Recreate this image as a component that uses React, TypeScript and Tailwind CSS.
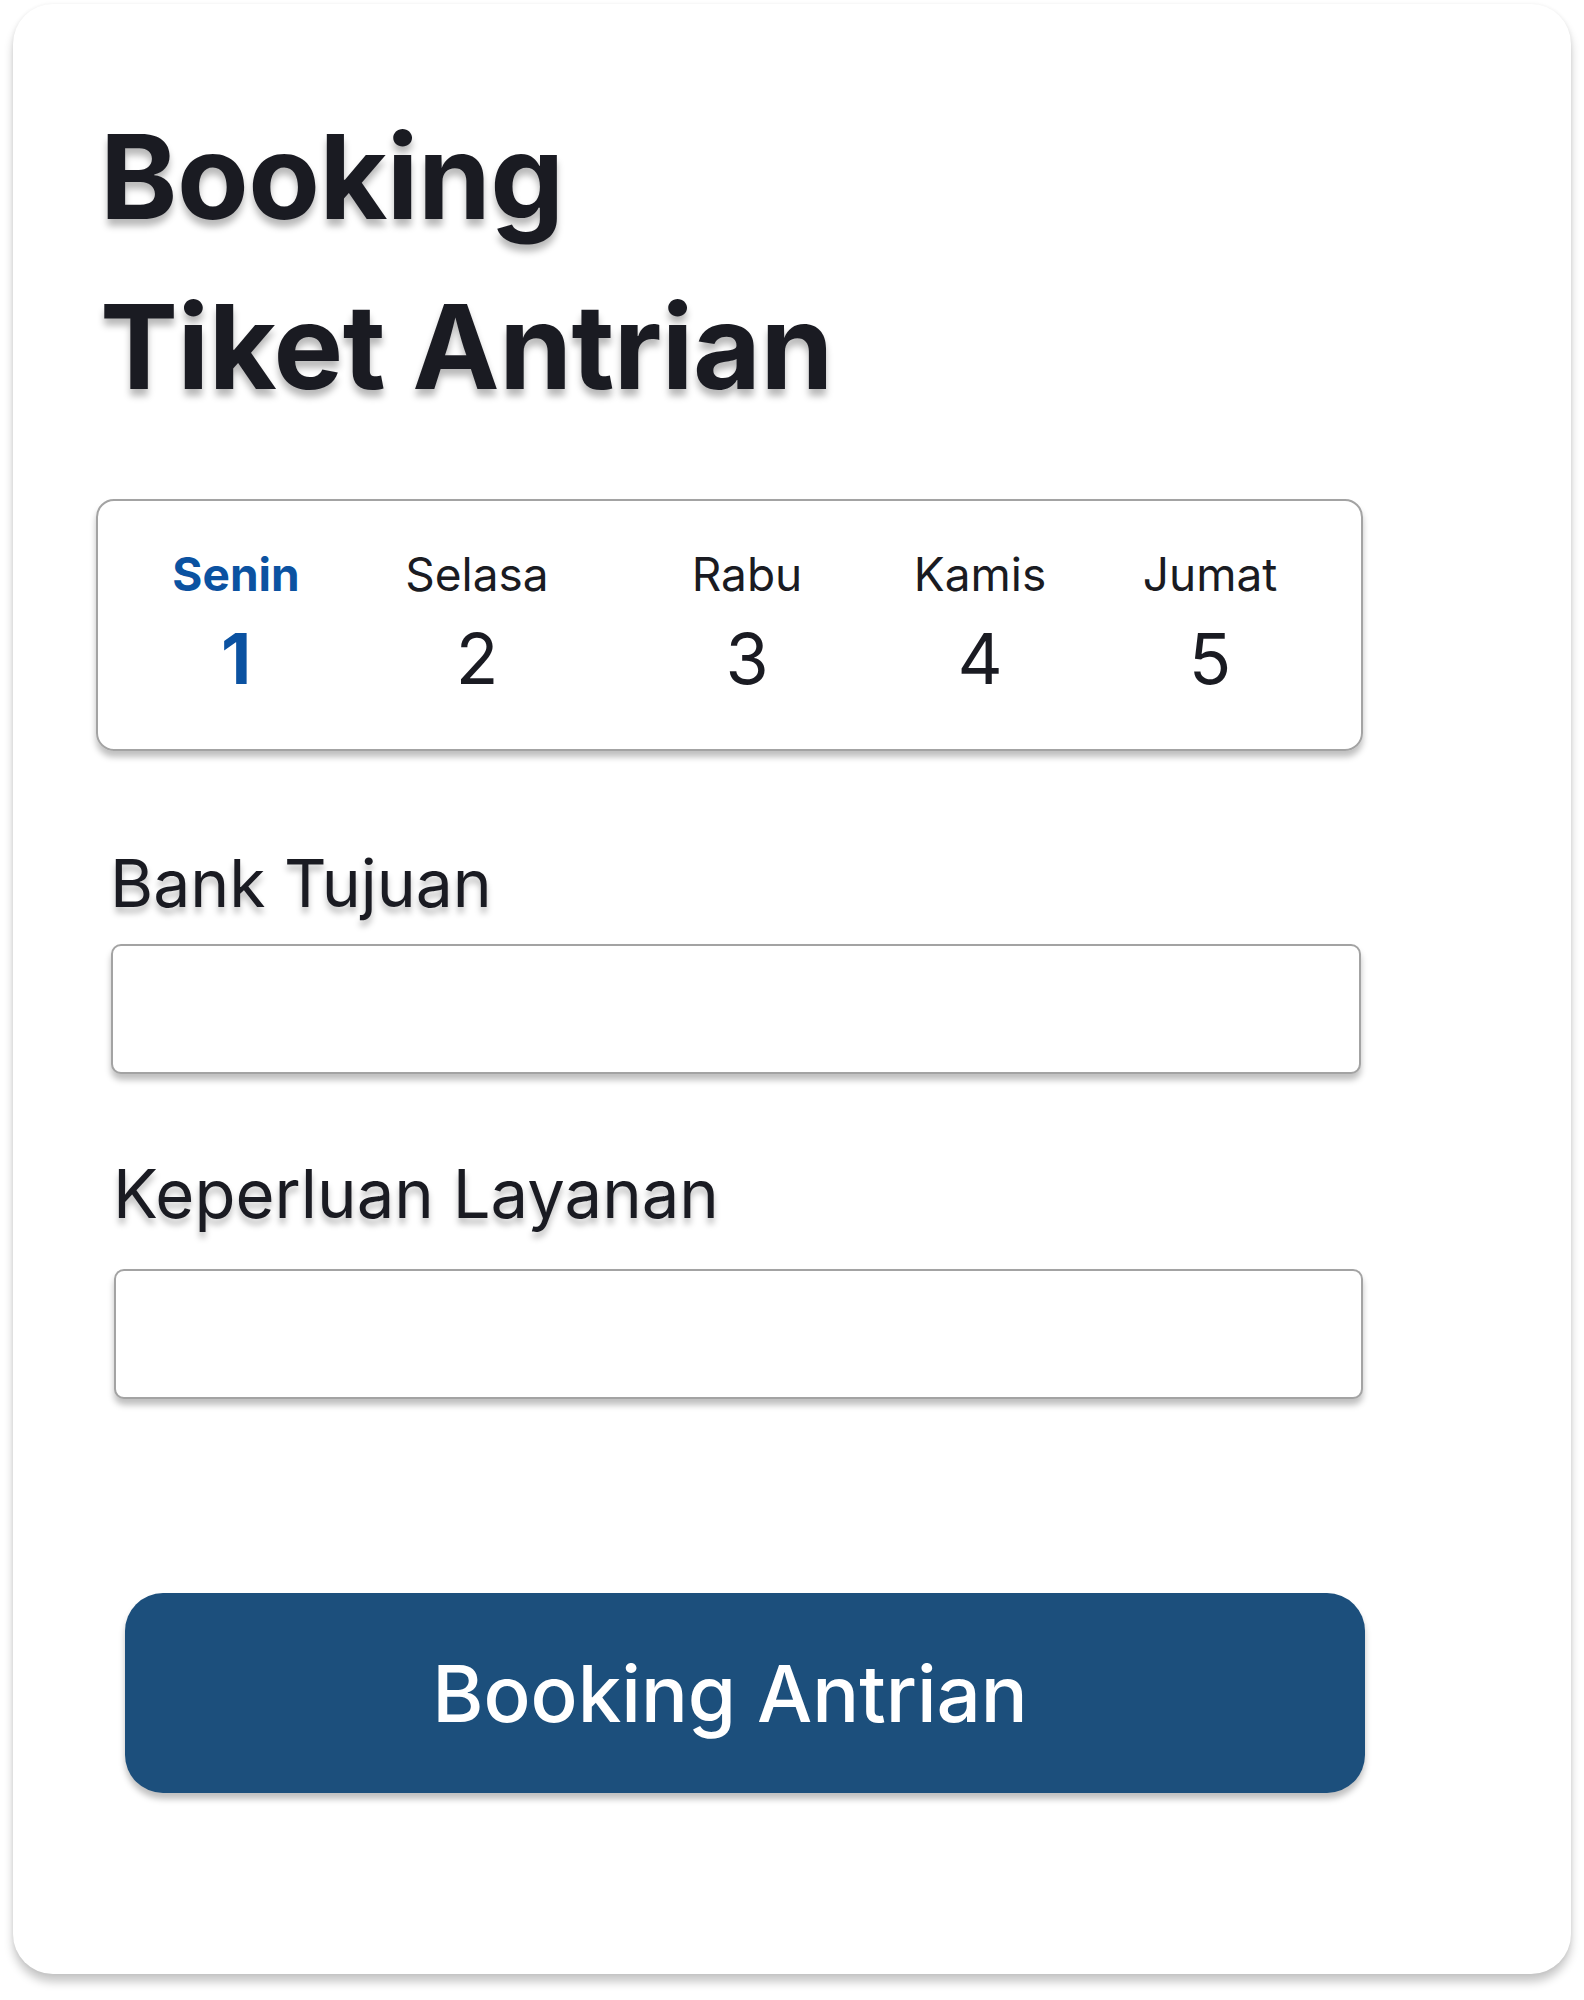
import React from 'react';

const days = [
    { name: 'Senin', num: 1, ml: 'ml-[58px]' },
    { name: 'Selasa', num: 2, ml: 'ml-[81px]' },
    { name: 'Rabu', num: 3, ml: 'ml-[110px]' },
    { name: 'Kamis', num: 4, ml: 'ml-[73px]' },
    { name: 'Jumat', num: 5, ml: 'ml-[70px]' },
];

export default function App() {
    const active = 1;

    return (
        <div className="min-h-screen bg-white font-['Inter','Liberation_Sans',sans-serif] text-[#1a1b22]">
            <div className="ml-[13px] mt-[4px] w-[1558px] h-[1970px] bg-white rounded-[40px] shadow-[0_8px_10px_rgba(0,0,0,0.22),0_0_4px_rgba(0,0,0,0.06)] pl-[83px] pt-[88px]">
                <h1 className="ml-[4px] text-[117px] leading-[170px] font-bold tracking-[-0.5px] [text-shadow:0_7px_7px_rgba(0,0,0,0.28)]">
                    Booking
                    <br />
                    Tiket Antrian
                </h1>

                <div className="mt-[67px] w-[1267px] h-[252px] border-2 border-[#a3a3a3] rounded-[18px] shadow-[0_6px_6px_rgba(0,0,0,0.25)] flex pt-[48px]">
                    {days.map((d) => {
                        const on = d.num === active;
                        return (
                            <div key={d.num} className={`${d.ml} w-[160px] flex flex-col items-center`}>
                                <span className={`text-[46px] leading-[50px] ${on ? 'font-bold text-[#0b52a1]' : 'font-normal text-[#1a1b22]'}`}>
                                    {d.name}
                                </span>
                                <span className={`mt-[20px] text-[70px] leading-[80px] ${on ? 'font-bold text-[#0b52a1]' : 'font-normal text-[#1a1b22]'}`}>
                                    {d.num}
                                </span>
                            </div>
                        );
                    })}
                </div>

                <label className="block mt-[92px] ml-[14px] text-[66px] leading-[80px] [text-shadow:0_6px_6px_rgba(0,0,0,0.25)]">
                    Bank Tujuan
                </label>
                <input
                    type="text"
                    className="block mt-[21px] ml-[15px] w-[1250px] h-[130px] bg-white border-2 border-[#a3a3a3] rounded-[10px] shadow-[0_6px_6px_rgba(0,0,0,0.25)] px-6 text-[40px] outline-none"
                />

                <label className="block mt-[80px] ml-[17px] text-[67px] leading-[80px] [text-shadow:0_6px_6px_rgba(0,0,0,0.25)]">
                    Keperluan Layanan
                </label>
                <input
                    type="text"
                    className="block mt-[35px] ml-[18px] w-[1249px] h-[130px] bg-white border-2 border-[#a3a3a3] rounded-[10px] shadow-[0_6px_6px_rgba(0,0,0,0.25)] px-6 text-[40px] outline-none"
                />

                <button className="block mt-[194px] ml-[29px] w-[1240px] h-[200px] bg-[#1c4f7c] rounded-[38px] shadow-[0_6px_6px_rgba(0,0,0,0.25)] text-white text-[78px] font-medium pr-[30px]">
                    Booking Antrian
                </button>
            </div>
        </div>
    );
}
